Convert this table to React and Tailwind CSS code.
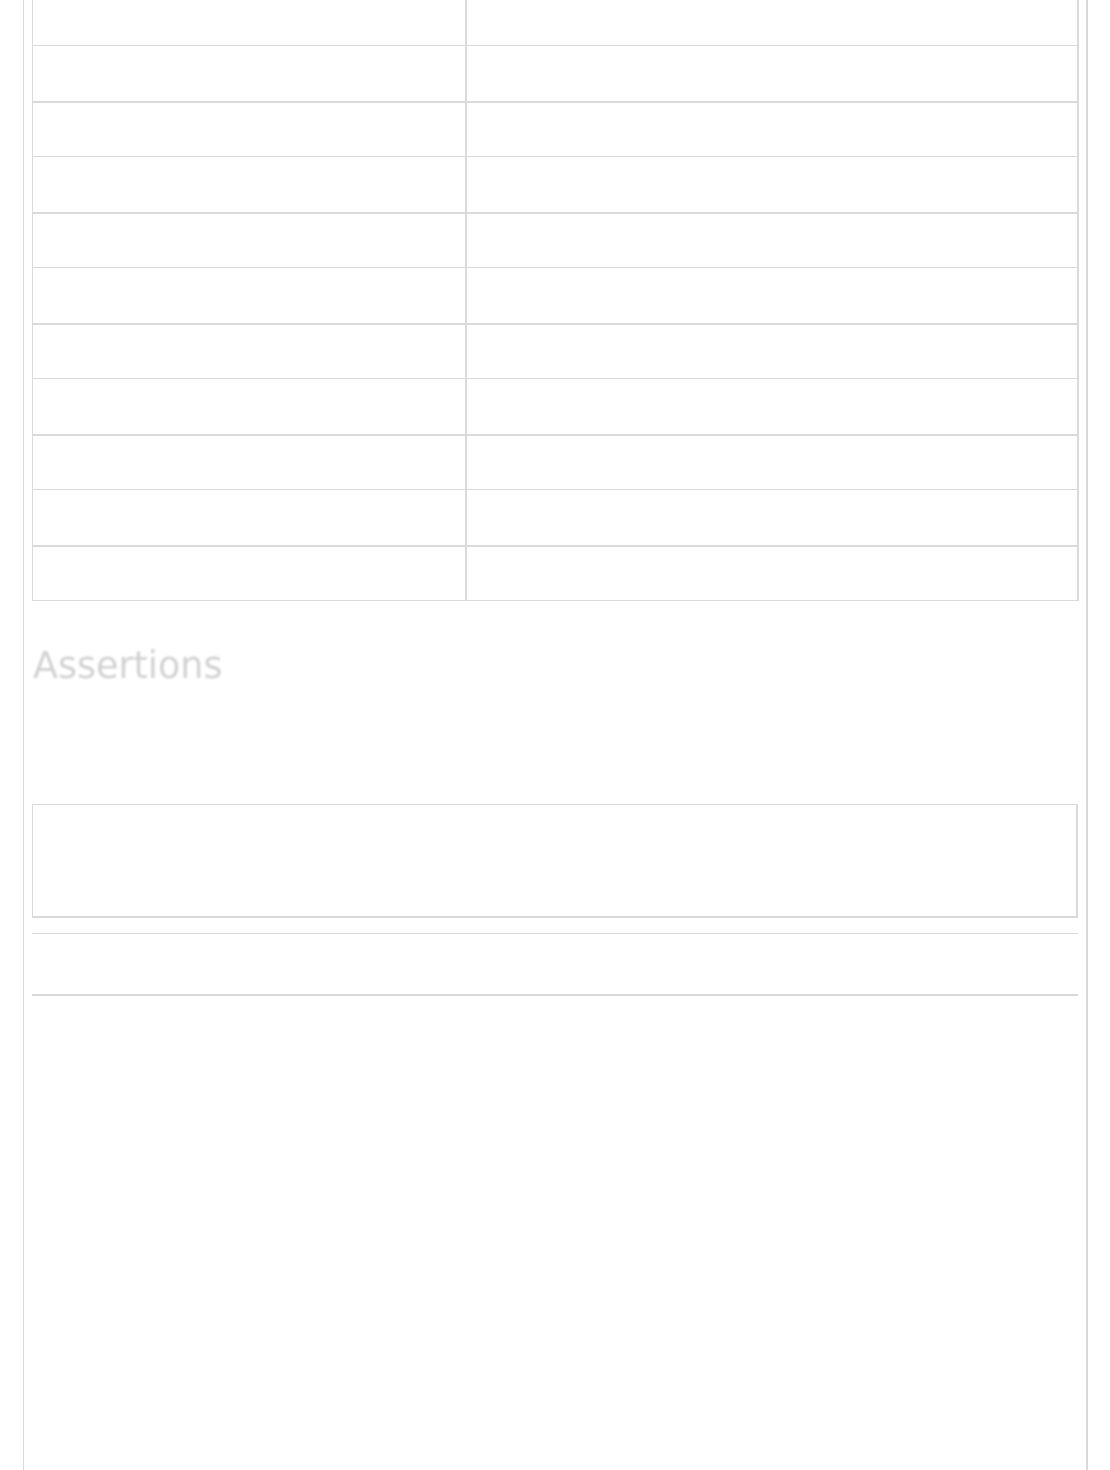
import React from 'react';

const rows = Array.from({ length: 11 }, (_, i) => i);

export default function App() {
  return (
    <div className="min-h-[1470px] bg-white flex" style={{ fontFamily: '"DejaVu Sans", Verdana, sans-serif' }}>
      <div className="ml-[23px] w-[1065px] border-l border-r-2 border-[#d9d9d9] pl-2 pr-[8px] overflow-hidden">
        {/* page is scrolled: the first row starts above the viewport */}
        <div className="-mt-[10px]">
          <table className="w-[1047px] border-collapse table-fixed">
            <tbody>
              {rows.map((i) => {
                const thick = i % 2 === 1 ? 'border-b-2' : '';
                return (
                  <tr key={i} className={i % 2 === 1 ? 'h-[56px]' : 'h-[55px]'}>
                    <td className={`w-[433px] border border-r-2 border-[#dadada] ${thick}`} />
                    <td className={`border border-r-2 border-[#dadada] ${thick}`} />
                  </tr>
                );
              })}
            </tbody>
          </table>
        </div>

        <h2 className="mt-[44px] text-[36.5px] leading-[42px] text-[#d2d2d2] blur-[1px] pl-px">Assertions</h2>

        <div className="mt-[117px] h-[114px] border border-[#d9d9d9] border-r-2 border-b-2" />

        <div className="mt-[15px] h-[63px] border-t border-b-2 border-[#d9d9d9]" />
      </div>
    </div>
  );
}
